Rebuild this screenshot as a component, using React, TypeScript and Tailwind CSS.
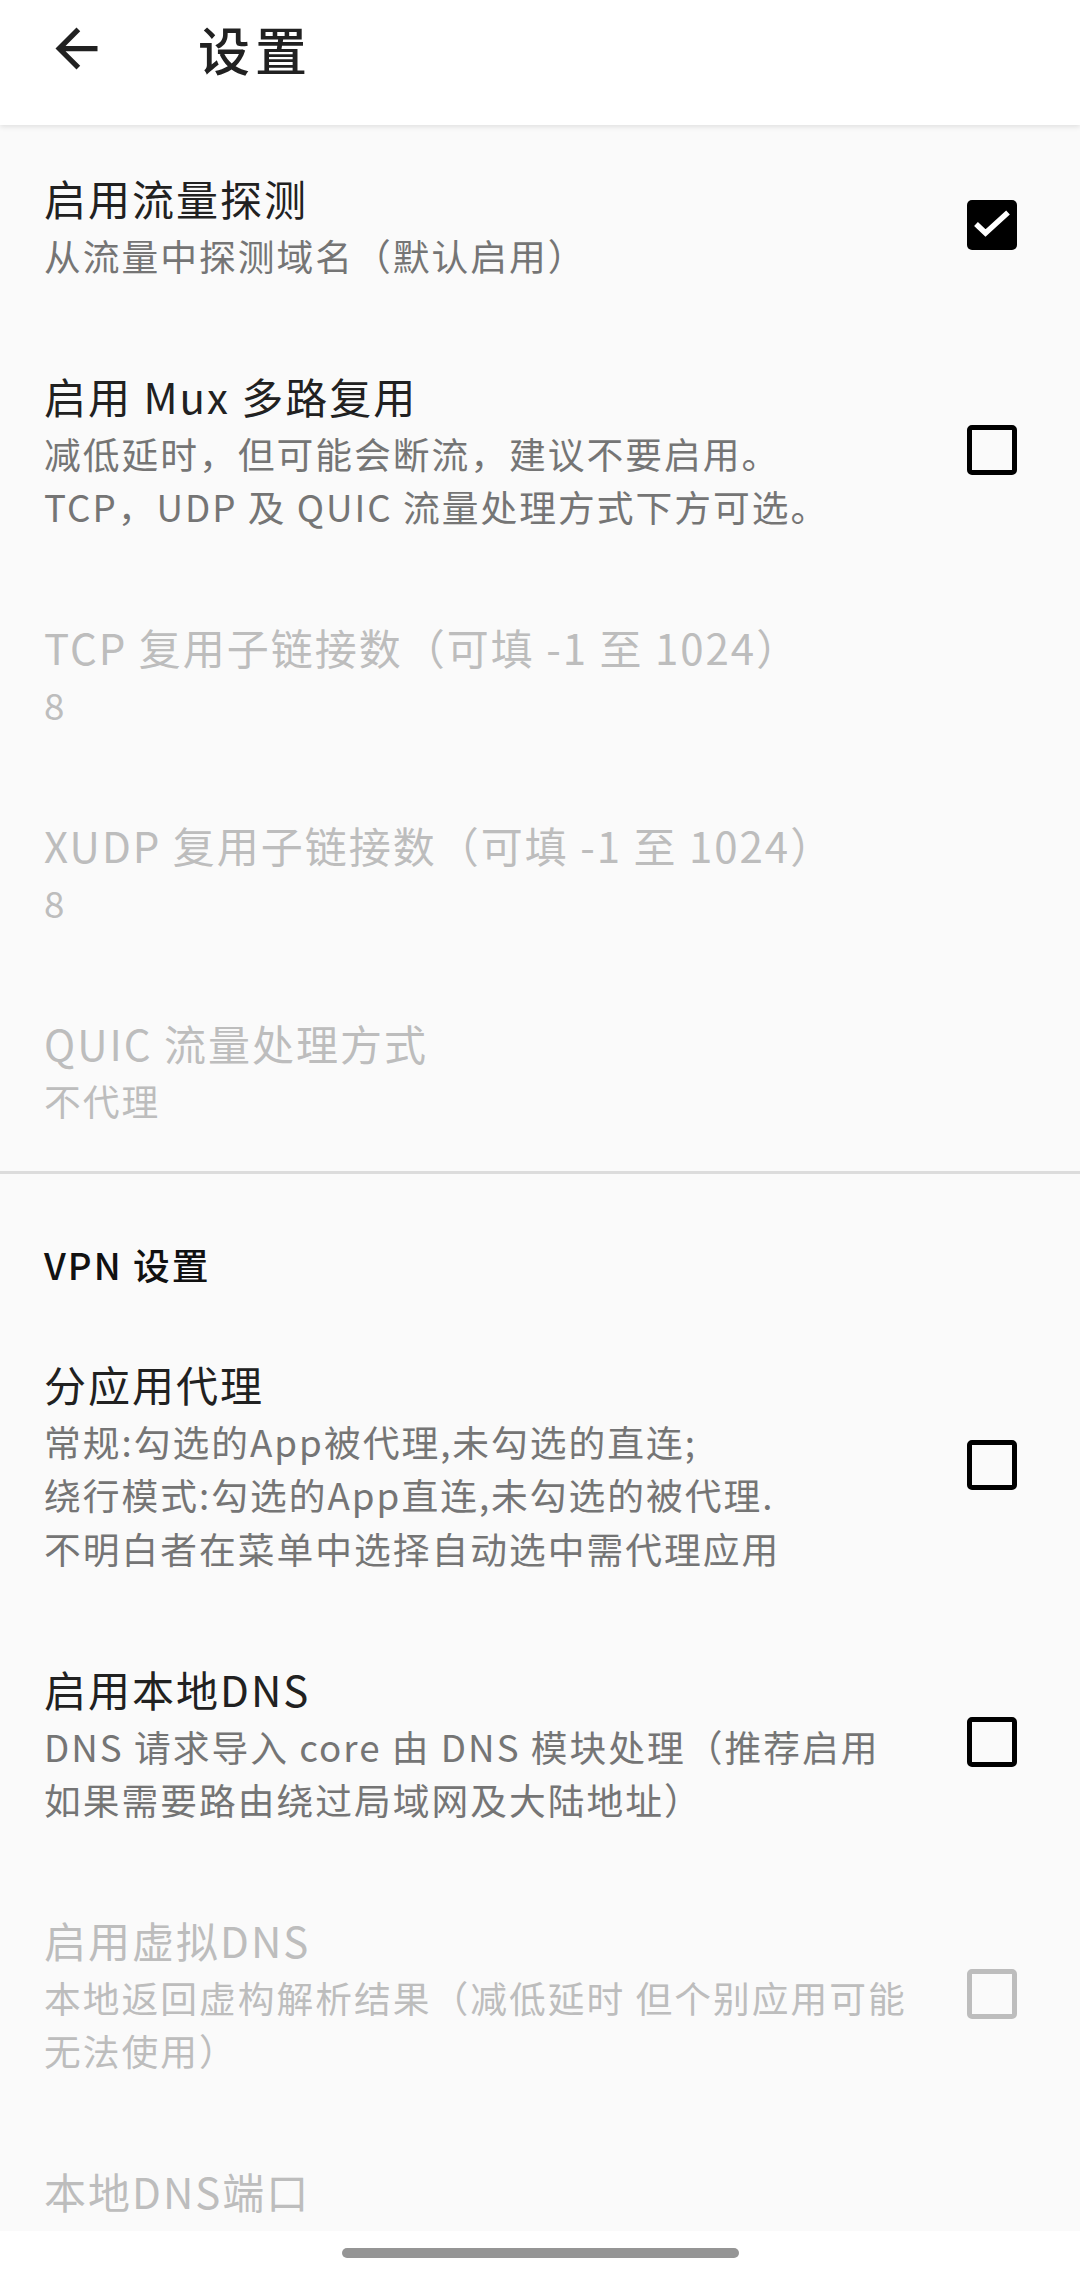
import React from "react";

type ItemProps = {
  title: string;
  summary?: string[];
  checkbox?: "on" | "off" | "disabled";
  disabled?: boolean;
};

function CheckBox({ state }: { state: "on" | "off" | "disabled" }) {
  if (state === "on") {
    return (
      <div className="w-[50px] h-[50px] rounded-[5px] bg-black shrink-0 flex items-center justify-center">
        <svg width="50" height="50" viewBox="0 0 50 50">
          <polyline points="9,24 18.5,33 41,12.5" fill="none" stroke="#ffffff" strokeWidth="5.5" />
        </svg>
      </div>
    );
  }
  return (
    <div
      className={
        state === "disabled"
          ? "w-[50px] h-[50px] rounded-[5px] border-[5px] border-[#bdbdbd] shrink-0"
          : "w-[50px] h-[50px] rounded-[5px] border-[5px] border-black shrink-0"
      }
    />
  );
}

function Item({ title, summary, checkbox, disabled }: ItemProps) {
  return (
    <div className="flex items-center pl-[44px] pr-[63px] py-[42px]">
      <div className="flex-1 flex flex-col">
        <div
          className={
            disabled
              ? "text-[42px] leading-[60.8px] tracking-[2px] text-[#bdbdbd] whitespace-nowrap"
              : "text-[42px] leading-[60.8px] tracking-[2px] text-[#212121] whitespace-nowrap"
          }
        >
          {title}
        </div>
        {summary?.map((s, i) => (
          <div
            key={i}
            className={
              disabled
                ? "text-[36.75px] leading-[53.2px] tracking-[2px] text-[#bdbdbd] whitespace-nowrap"
                : "text-[36.75px] leading-[53.2px] tracking-[2px] text-[#757575] whitespace-nowrap"
            }
          >
            {s}
          </div>
        ))}
      </div>
      {checkbox && <CheckBox state={checkbox} />}
    </div>
  );
}

export default function App() {
  return (
    <div className="w-[1080px] h-[2275px] flex flex-col bg-[#fafafa] overflow-hidden font-['Noto_Sans_CJK_SC','Noto_Sans',sans-serif]">
      <header className="h-[125px] bg-white shrink-0 relative z-10 shadow-[0_2px_5px_rgba(0,0,0,0.10)]">
        <div className="h-[97px] flex items-center">
          <svg className="ml-[45px] w-[63px] h-[63px]" viewBox="0 0 24 24">
            <path
              d="M20 11H7.83l5.59-5.59L12 4l-8 8 8 8 1.41-1.41L7.83 13H20v-2z"
              fill="#212121"
            />
          </svg>
          <div className="ml-[90px] text-[52px] leading-[72px] tracking-[5px] font-medium text-[#212121]">设置</div>
        </div>
      </header>

      <main className="flex-1 overflow-hidden flex flex-col pt-[1px]">
        <Item title="启用流量探测" summary={["从流量中探测域名（默认启用）"]} checkbox="on" />
        <Item
          title="启用 Mux 多路复用"
          summary={["减低延时，但可能会断流，建议不要启用。", "TCP，UDP 及 QUIC 流量处理方式下方可选。"]}
          checkbox="off"
        />
        <Item title="TCP 复用子链接数（可填 -1 至 1024）" summary={["8"]} disabled />
        <Item title="XUDP 复用子链接数（可填 -1 至 1024）" summary={["8"]} disabled />
        <Item title="QUIC 流量处理方式" summary={["不代理"]} disabled />

        <div className="h-[3px] bg-[#dcdcdc] mt-[2px] shrink-0" />

        <div className="pl-[44px] pt-[64px] pb-[21px] text-[36.75px] leading-[53.2px] tracking-[2px] font-medium text-[#111111]">
          VPN 设置
        </div>

        <Item
          title="分应用代理"
          summary={[
            "常规:勾选的App被代理,未勾选的直连;",
            "绕行模式:勾选的App直连,未勾选的被代理.",
            "不明白者在菜单中选择自动选中需代理应用",
          ]}
          checkbox="off"
        />
        <Item
          title="启用本地DNS"
          summary={["DNS 请求导入 core 由 DNS 模块处理（推荐启用", "如果需要路由绕过局域网及大陆地址）"]}
          checkbox="off"
        />
        <Item
          title="启用虚拟DNS"
          summary={["本地返回虚构解析结果（减低延时 但个别应用可能", "无法使用）"]}
          checkbox="disabled"
          disabled
        />
        <Item title="本地DNS端口" disabled />
      </main>

      <nav className="h-[44px] bg-white shrink-0 flex items-center justify-center">
        <div className="w-[397px] h-[10px] rounded-full bg-[#959595]" />
      </nav>
    </div>
  );
}
